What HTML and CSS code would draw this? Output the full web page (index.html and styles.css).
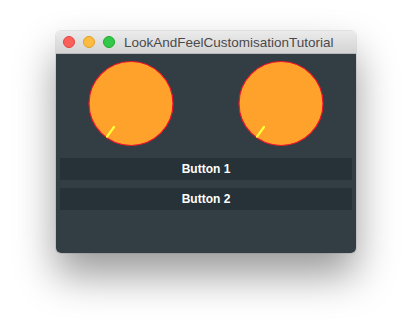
FILE: index.html
```html
<!DOCTYPE html>
<html lang="en">

<head>
  <meta charset="UTF-8">
  <title>LookAndFeelCustomisationTutorial</title>
  <link rel="stylesheet" href="styles.css">
</head>

<body>

  <div class="window">
    <header class="titlebar">
      <div class="lights">
        <span class="light red"></span>
        <span class="light yellow"></span>
        <span class="light green"></span>
      </div>
      <div class="title">LookAndFeelCustomisationTutorial</div>
    </header>

    <div class="content">
      <div class="knobs">
        <div class="knob">
          <svg width="150" height="100" viewBox="0 0 150 100">
            <circle cx="75" cy="49.5" r="42" fill="#ffa22b" stroke="#f0142d" stroke-width="1.2" />
            <line x1="58" y1="73" x2="51" y2="82.6" stroke="#ffff3c" stroke-width="2.2" stroke-linecap="round" />
          </svg>
        </div>
        <div class="knob">
          <svg width="150" height="100" viewBox="0 0 150 100">
            <circle cx="75" cy="49.5" r="42" fill="#ffa22b" stroke="#f0142d" stroke-width="1.2" />
            <line x1="58" y1="73" x2="51" y2="82.6" stroke="#ffff3c" stroke-width="2.2" stroke-linecap="round" />
          </svg>
        </div>
      </div>

      <div class="buttons">
        <button class="btn">Button 1</button>
        <button class="btn">Button 2</button>
      </div>
    </div>
  </div>

</body>

</html>
```

FILE: styles.css
```css
html,
body {
  height: 100%;
}

body {
  margin: 0;
  background: #fff;
  font-family: "Liberation Sans", Arial, sans-serif;
  padding-top: 31px;
  box-sizing: border-box;
}

.window {
  width: 300px;
  margin: 0 auto;
  border-radius: 5px;
  overflow: hidden;
  box-shadow: 0 22px 40px rgba(0, 0, 0, 0.4), 0 0 0 1px rgba(0, 0, 0, 0.08);
}

.titlebar {
  height: 23px;
  display: flex;
  align-items: center;
  padding-left: 7px;
  background: linear-gradient(#ecebec, #d5d4d5);
  border-bottom: 1px solid #b9b8b9;
  box-sizing: border-box;
}

.lights {
  display: flex;
  gap: 8px;
  margin-right: 9px;
}

.light {
  width: 12px;
  height: 12px;
  border-radius: 50%;
  box-sizing: border-box;
}

.light.red {
  background: #fc605b;
  border: 1px solid #e0443e;
}

.light.yellow {
  background: #fdbc40;
  border: 1px solid #dea123;
}

.light.green {
  background: #34c84a;
  border: 1px solid #1aab29;
}

.title {
  font-size: 13.5px;
  color: #4a4a4a;
}

.content {
  height: 199px;
  background: #323e44;
}

.knobs {
  display: grid;
  grid-template-columns: repeat(2, 1fr);
  height: 100px;
}

.knob svg {
  display: block;
}

.buttons {
  display: flex;
  flex-direction: column;
  gap: 8px;
  padding: 4px;
}

.btn {
  height: 22px;
  border: none;
  padding: 0;
  background: #263238;
  color: #fff;
  font-family: "Liberation Sans", Arial, sans-serif;
  font-weight: bold;
  font-size: 12px;
}
```
